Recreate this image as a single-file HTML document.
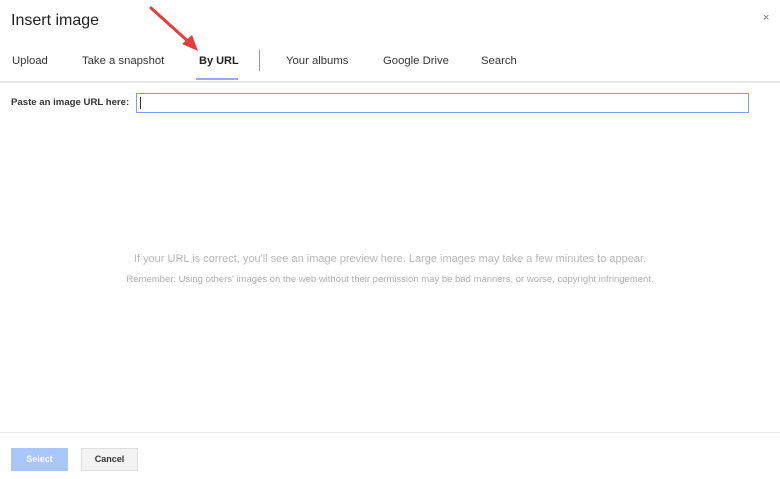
<!DOCTYPE html>
<html><head><style>
body{margin:0;width:780px;height:479px;background:#fff;font-family:"Liberation Sans",Arial,sans-serif;position:relative;overflow:hidden}
.a{position:absolute;white-space:nowrap}
.tab{position:absolute;top:55px;font-size:11.3px;color:#333}
</style></head><body>
<div class="a" style="left:11px;top:12px;font-size:16px;color:#222">Insert image</div>
<div class="a" style="left:763px;top:12px;font-size:11px;color:#777">×</div>
<div class="tab" style="left:12px">Upload</div>
<div class="tab" style="left:82px">Take a snapshot</div>
<div class="tab" style="left:199px;font-weight:bold;color:#222;font-size:11px">By URL</div>
<div class="a" style="left:196px;top:78px;width:42px;height:2px;background:#8fb0e8"></div>
<div class="a" style="left:259px;top:50px;width:1px;height:21px;background:#999"></div>
<div class="tab" style="left:286px">Your albums</div>
<div class="tab" style="left:383px">Google Drive</div>
<div class="tab" style="left:481px">Search</div>
<div class="a" style="left:0;top:81px;width:780px;height:2px;background:#e6e6e6"></div>
<svg class="a" style="left:0;top:0" width="260" height="60"><line x1="151" y1="8" x2="191" y2="44" stroke="#e63c3c" stroke-width="3" stroke-linecap="round"/><polygon points="198,51 182,44 192,35" fill="#e63c3c"/></svg>
<div class="a" style="left:11px;top:97px;font-size:9.6px;font-weight:bold;color:#333">Paste an image URL here:</div>
<div class="a" style="left:136px;top:93px;width:611px;height:18px;border:1px solid #7b9fe0"></div>
<div class="a" style="left:140px;top:97px;width:1px;height:12px;background:#333"></div>
<div class="a" style="left:0;width:780px;text-align:center;top:253px;font-size:11px;color:#b8b8b8">If your URL is correct, you'll see an image preview here. Large images may take a few minutes to appear.</div>
<div class="a" style="left:0;width:780px;text-align:center;top:274px;font-size:9.5px;color:#b0b0b0">Remember: Using others' images on the web without their permission may be bad manners, or worse, copyright infringement.</div>
<div class="a" style="left:0;top:432px;width:780px;height:1px;background:#eee"></div>
<div class="a" style="left:11px;top:448px;width:57px;height:23px;background:#a8c6f7;color:#fff;font-size:9px;font-weight:bold;text-align:center;line-height:23px">Select</div>
<div class="a" style="left:81px;top:448px;width:55px;height:21px;background:#f3f3f3;border:1px solid #ddd;color:#333;font-size:9px;font-weight:bold;text-align:center;line-height:21px">Cancel</div>
</body></html>
